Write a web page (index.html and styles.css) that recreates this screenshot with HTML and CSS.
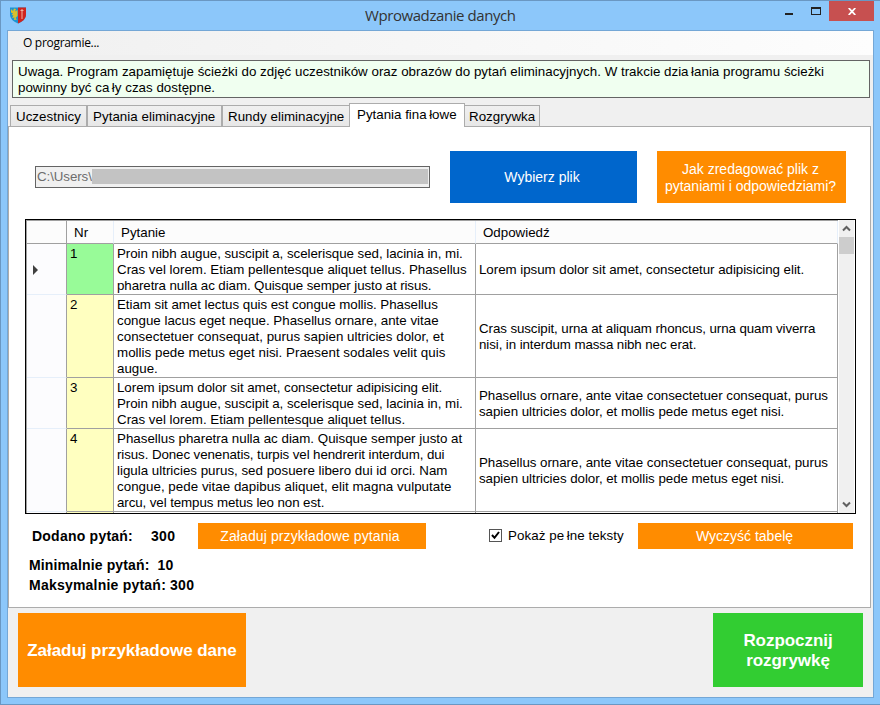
FILE: index.html
```html
<!DOCTYPE html>
<html lang="pl">
<head>
<meta charset="utf-8">
<title>Wprowadzanie danych</title>
<link rel="stylesheet" href="styles.css">
</head>
<body>
<div class="window">
  <header class="titlebar">
    <svg class="crest" width="18" height="18" viewBox="0 0 18 18">
      <path d="M1 1.500H17V9Q17 14 9 17.500Q1 14 1 9Z" fill="#1d93d2"/>
      <path d="M9 1.500H17V9Q17 14 9 17.500Z" fill="#cf241f"/>
      <path d="M2 3L4 5L5 2.500L7 3L6 5.500L8.500 4V10L6.500 12L8 13.500L5 14L5.500 11.500L3 12L4.500 9.500L2.500 9L4 7.500L2 6.500Z" fill="#d9c02d"/>
      <path d="M13 3V13M11.500 4.500H14.500" stroke="#f0b0a0" stroke-width="1" fill="none"/>
    </svg>
    <h1 class="title"><span class="t-title">Wprowadzanie danych</span></h1>
    <div class="controls">
      <span class="min"></span>
      <span class="max"></span>
      <span class="close"><svg width="8" height="7" viewBox="0 0 8 7"><path d="M.7 0L7.300 7M7.300 0L.7 7" stroke="#fff" stroke-width="1.800"/></svg></span>
    </div>
  </header>
  <main class="client">
    <nav class="menu"><span class="t-menu">O programie...</span></nav>
    <div class="notice">Uwaga. Program zapamiętuje ścieżki do zdjęć uczestników oraz obrazów do pytań eliminacyjnych. W trakcie dzia<span class="gap">łania programu ścieżki</span><br>powinny być ca<span class="gap">ły czas dostępne.</span></div>
    <div class="tabs">
      <div class="tab tab-a"><span>Uczestnicy</span></div>
      <div class="tab tab-b"><span>Pytania eliminacyjne</span></div>
      <div class="tab tab-c"><span>Rundy eliminacyjne</span></div>
      <div class="tab active"><span>Pytania fina<span class="gap">łowe</span></span></div>
      <div class="tab tab-e"><span>Rozgrywka</span></div>
    </div>
    <section class="panel">
      <div class="file-row">
        <div class="path"><span>C:\Users\</span><i class="mask"></i></div>
        <div class="btn blue"><span>Wybierz plik</span></div>
        <div class="btn help"><span>Jak zredagować plik z<br>pytaniami i odpowiedziami?</span></div>
      </div>
      <div class="table">
        <div class="grid">
          <div class="h rh"></div><div class="h nr">Nr</div><div class="h q">Pytanie</div><div class="h a">Odpowiedź</div>

          <div class="c rh"><i class="marker"></i></div><div class="c nr first">1</div>
          <div class="c q"><span class="tight">Proin nibh augue, suscipit a, scelerisque sed, lacinia in, mi.</span><br>Cras vel lorem. Etiam pellentesque aliquet tellus. Phasellus<br><span class="tighter">pharetra nulla ac diam. Quisque semper justo at risus.</span></div>
          <div class="c a"><span class="tight">Lorem ipsum dolor sit amet, consectetur adipisicing elit.</span></div>

          <div class="c rh"></div><div class="c nr">2</div>
          <div class="c q"><span class="tight">Etiam sit amet lectus quis est congue mollis. Phasellus</span><br>congue lacus eget neque. Phasellus ornare, ante vitae<br><span class="wide">consectetuer consequat, purus sapien ultricies dolor, et</span><br><span class="wide">mollis pede metus eget nisi. Praesent sodales velit quis</span><br>augue.</div>
          <div class="c a"><span><span class="tighter">Cras suscipit, urna at aliquam rhoncus, urna quam viverra</span><br><span class="tighter">nisi, in interdum massa nibh nec erat.</span></span></div>

          <div class="c rh"></div><div class="c nr">3</div>
          <div class="c q"><span class="tight">Lorem ipsum dolor sit amet, consectetur adipisicing elit.</span><br><span class="tight">Proin nibh augue, suscipit a, scelerisque sed, lacinia in, mi.</span><br>Cras vel lorem. Etiam pellentesque aliquet tellus.</div>
          <div class="c a"><span class="tight">Phasellus ornare, ante vitae consectetuer consequat, purus<br>sapien ultricies dolor, et mollis pede metus eget nisi.</span></div>

          <div class="c rh"></div><div class="c nr">4</div>
          <div class="c q">Phasellus pharetra nulla ac diam. Quisque semper justo at<br><span class="tighter">risus. Donec venenatis, turpis vel hendrerit interdum, dui</span><br>ligula ultricies purus, sed posuere libero dui id orci. Nam<br><span class="wide">congue, pede vitae dapibus aliquet, elit magna vulputate</span><br><span class="tighter">arcu, vel tempus metus leo non est.</span></div>
          <div class="c a"><span class="tight">Phasellus ornare, ante vitae consectetuer consequat, purus<br>sapien ultricies dolor, et mollis pede metus eget nisi.</span></div>

          <div class="c rh"></div><div class="c nr"></div><div class="c q"></div><div class="c a"></div>
        </div>
        <div class="scroll">
          <svg class="arrow" width="15" height="16" viewBox="0 0 15 16"><path d="M4 10L7.500 6.500L11 10" fill="none" stroke="#606060" stroke-width="2"/></svg>
          <i class="thumb"></i>
          <svg class="arrow down" width="15" height="16" viewBox="0 0 15 16"><path d="M4 6L7.500 9.500L11 6" fill="none" stroke="#606060" stroke-width="2"/></svg>
        </div>
      </div>
      <div class="actions">
        <b class="added"><span>Dodano pytań:</span></b><b class="count"><span>300</span></b>
        <div class="btn load"><span>Załaduj przykładowe pytania</span></div>
        <i class="check"><svg width="11" height="11" viewBox="0 0 11 11"><path d="M2 5L4.500 7.800L9 2" fill="none" stroke="#000" stroke-width="2"/></svg></i>
        <span class="check-label">Pokaż pe<span class="gap">łne teksty</span></span>
        <div class="btn clear"><span>Wyczyść tabelę</span></div>
      </div>
      <div class="limits">
        <div><span class="l1">Minimalnie pytań:&nbsp; 10</span></div>
        <div><span class="l2">Maksymalnie pytań: 300</span></div>
      </div>
    </section>
    <footer class="footer">
      <div class="btn big"><span>Załaduj przykładowe dane</span></div>
      <div class="btn big start"><span>Rozpocznij<br>rozgrywkę</span></div>
    </footer>
  </main>
</div>
</body>
</html>
```
FILE: styles.css
```css
* { box-sizing: border-box; }
body { margin: 0; font: 13.33px/16px "Liberation Sans", Arial, sans-serif; color: #000; }
i { font-style: normal; }
.gap { margin-left: 2.5px; }
.tight { letter-spacing: -0.04px; }
.tighter { letter-spacing: -0.09px; }
.wide { letter-spacing: 0.03px; }
.window { width: 880px; height: 705px; background: #8cc7fa; border: 1px solid #6a97c2; border-right: 0; padding: 0 6px 6px; display: flex; flex-direction: column; }
.titlebar { height: 29px; display: flex; flex: none; }
.crest { margin: 5px 0 0 2px; flex: none; }
.title { margin: 0; flex: none; width: 152px; margin-left: 338px; font: 15px/29px "Open Sans", "Noto Sans", sans-serif; letter-spacing: -0.42px; color: #333; white-space: nowrap; }
.controls { display: flex; margin-left: 268px; }
.min { width: 8px; height: 2px; background: #222; margin-top: 12px; }
.max { width: 10px; height: 8px; border: 1px solid #222; border-top-width: 2px; margin: 6px 8px 0 18px; }
.close { width: 45px; height: 20px; background: #c75050; display: flex; justify-content: center; align-items: center; flex: none; }
.client { width: 867px; height: 668px; border: 1px solid #74a7d6; background: #f0f0f0; flex: none; }
.menu { height: 24px; padding-left: 15px; background: linear-gradient(90deg, #f0f0f0, #fdfdfd); font: 12px/24px "Open Sans", "Noto Sans", sans-serif; letter-spacing: -0.3px; white-space: nowrap; }
.notice { width: 858px; height: 38px; margin: 5px 0 0 4px; border: 1px solid #646464; background: #f0fff0; padding: 3px 5px; letter-spacing: 0.015px; white-space: nowrap; }
.tabs { display: flex; align-items: flex-end; height: 28px; padding-left: 2px; }
.tab { height: 21px; border: 1px solid #acacac; border-bottom: 0; background: linear-gradient(#f0f0f0, #e7e7e7); padding: 3px 0 0 5px; letter-spacing: 0.04px; white-space: nowrap; flex: none; }
.tab-a { width: 77px; }
.tab-b { width: 135px; }
.tab-c { width: 127px; border-right: 0; }
.tab-e { width: 75px; border-left: 0; padding-left: 4px; }
.tab.active { width: 116px; height: 24px; padding: 3px 0 0 7px; background: #fff; margin-bottom: -1px; position: relative; letter-spacing: 0; }
.panel { width: 863px; height: 482px; border: 1px solid #acacac; background: #fff; }
.file-row { display: flex; padding: 24px 0 0 26px; height: 92px; }
.path { width: 395px; height: 22px; margin: 15px 20px 0 0; border: 1px solid #646464; background: #f0f0f0; color: #6d6d6d; padding: 2px 1px; display: flex; }
.path span { width: 55px; line-height: 15px; letter-spacing: -0.08px; }
.mask { flex: 1; height: 15px; background: #c3c3c3; }
.btn { background: #ff8c00; color: #fff; display: flex; align-items: center; justify-content: center; text-align: center; white-space: nowrap; flex: none; font-size: 14px; line-height: 17px; }
.blue { width: 187px; height: 52px; background: #0066cc; margin-right: 20px; padding-right: 3px; }
.help { width: 189px; height: 52px; padding: 2px 2px 0 0; }
.table { width: 831px; height: 295px; margin-left: 16px; border: 1px solid #000; display: flex; overflow: hidden; }
.grid { width: 812px; flex: none; display: grid; grid-template-columns: 40px 47px 362px 362px; grid-template-rows: 23px 51px 83px 51px 83px 51px; border-left: 1px solid #a0a0a0; border-top: 1px solid #a0a0a0; white-space: nowrap; }
.grid > div { border-right: 1px solid #a0a0a0; border-bottom: 1px solid #a0a0a0; }
.grid > .rh { display: flex; align-items: center; background: #fcfcfe; border-bottom-color: #e6effa; }
.grid > .nr { background: #ffffc0; padding: 2px 3px; }
.grid > .first { background: #98fb98; }
.grid > .q { padding: 2px 3px; }
.grid > .a { padding: 2px 0 0 3px; display: flex; align-items: center; }
.grid > .h { background: #fcfcfc; border-right-color: #e6effa; line-height: 22px; padding: 1px 0 0 7px; }
.grid > .h.rh { border-right-color: #a0a0a0; border-bottom-color: #a0a0a0; }
.marker { margin: 2px 0 0 6px; border: solid transparent; border-width: 5px 0 5px 5px; border-left-color: #404040; }
.scroll { width: 15px; margin-left: 1px; background: #f0f0f0; display: flex; flex-direction: column; }
.arrow { display: block; height: 17px; flex: none; }
.thumb { height: 17px; background: #cdcdcd; }
.down { margin-top: auto; }
.actions { display: flex; margin-top: 9px; padding-left: 23px; height: 26px; align-items: center; white-space: nowrap; }
.added { width: 119px; font-size: 14px; letter-spacing: 0.23px; }
.count { width: 47px; font-size: 14px; letter-spacing: 0.3px; }
.load { width: 228px; height: 26px; margin-right: 63px; padding-right: 4px; letter-spacing: 0.1px; }
.check { width: 13px; height: 13px; border: 1px solid #555; margin: -1px 6px 0 0; }
.check svg { display: block; }
.check-label { width: 130px; line-height: 26px; height: 26px; letter-spacing: 0.08px; }
.clear { width: 215px; height: 26px; padding-right: 2px; }
.limits { font-weight: bold; font-size: 14px; line-height: 20px; padding: 6px 0 0 20px; white-space: nowrap; }
.l1 { letter-spacing: 0.13px; }
.l2 { letter-spacing: 0.22px; }
.footer { display: flex; justify-content: space-between; padding: 5px 10px 0 10px; }
.big { width: 228px; height: 74px; font-size: 17px; line-height: 20px; font-weight: bold; padding-top: 2px; letter-spacing: -0.05px; }
.start { width: 150px; background: #32cd32; }
```
